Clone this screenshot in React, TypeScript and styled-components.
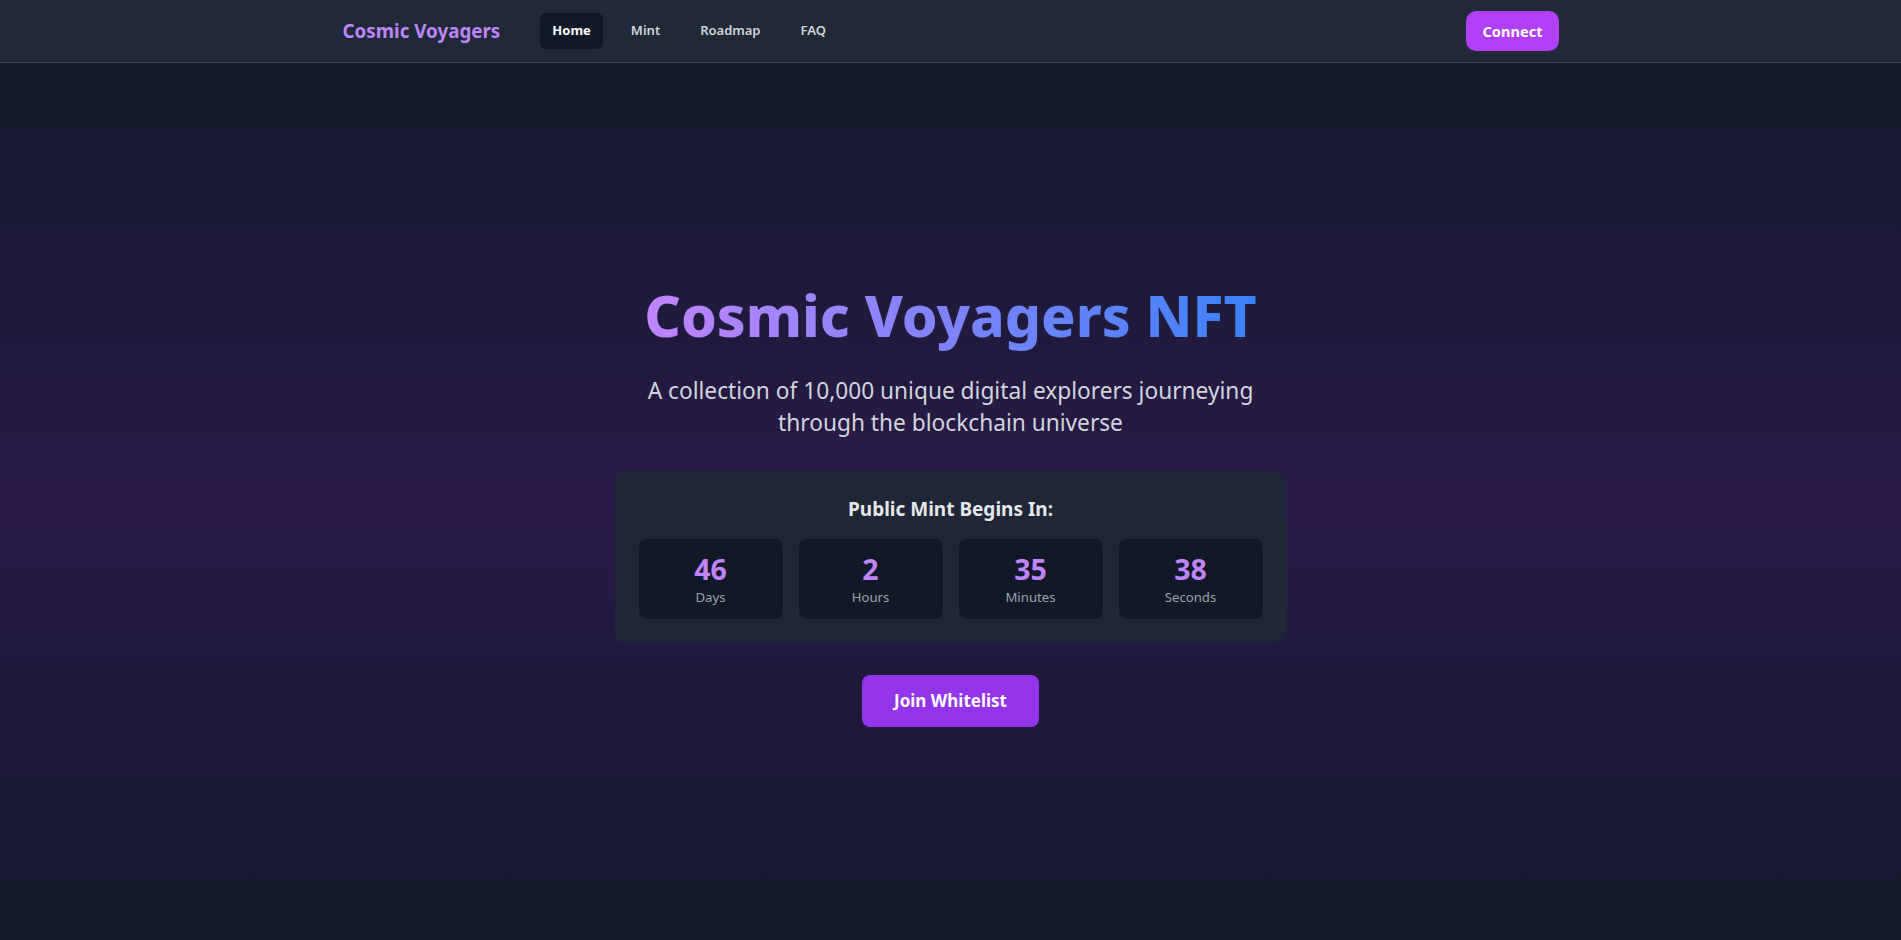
import styled, { createGlobalStyle } from "styled-components";

const GlobalStyle = createGlobalStyle`
  * {
    box-sizing: border-box;
  }
  body {
    margin: 0;
    font-family: "Noto Sans", "Open Sans", sans-serif;
    background: #111827;
    color: #ffffff;
  }
`;

const units = [
  { value: 46, label: "Days" },
  { value: 2, label: "Hours" },
  { value: 35, label: "Minutes" },
  { value: 38, label: "Seconds" },
];

const links = ["Home", "Mint", "Roadmap", "FAQ"];

export default function App() {
  return (
    <Page>
      <GlobalStyle />
      <Navbar>
        <NavInner>
          <NavLeft>
            <Logo>Cosmic Voyagers</Logo>
            <NavLinks>
              {links.map((link) => (
                <NavLink key={link} $active={link === "Home"}>
                  {link}
                </NavLink>
              ))}
            </NavLinks>
          </NavLeft>
          <ConnectButton>Connect</ConnectButton>
        </NavInner>
      </Navbar>

      <Hero>
        <Title>Cosmic Voyagers NFT</Title>
        <Subtitle>
          A collection of 10,000 unique digital explorers journeying through
          the blockchain universe
        </Subtitle>

        <CountdownCard>
          <CountdownTitle>Public Mint Begins In:</CountdownTitle>
          <CountdownGrid>
            {units.map((unit) => (
              <TimeBox key={unit.label}>
                <TimeValue>{unit.value}</TimeValue>
                <TimeLabel>{unit.label}</TimeLabel>
              </TimeBox>
            ))}
          </CountdownGrid>
        </CountdownCard>

        <WhitelistButton>Join Whitelist</WhitelistButton>
      </Hero>
    </Page>
  );
}

const Page = styled.div`
  min-height: 100vh;
  display: flex;
  flex-direction: column;
  background: #111827;
`;

const Navbar = styled.nav`
  background: #1f2937;
  border-bottom: 1px solid #374151;
`;

const NavInner = styled.div`
  max-width: 1280px;
  margin: 0 auto;
  padding: 0 32px;
  height: 62px;
  display: flex;
  align-items: center;
  justify-content: space-between;
`;

const NavLeft = styled.div`
  display: flex;
  align-items: center;
`;

const Logo = styled.span`
  font-size: 18.8px;
  font-weight: 700;
  color: #c084fc;
`;

const NavLinks = styled.div`
  display: flex;
  align-items: center;
  gap: 16px;
  margin-left: 40px;
`;

const NavLink = styled.a<{ $active?: boolean }>`
  padding: 7px 12px 9px;
  border-radius: 6px;
  font-size: 13px;
  line-height: 20px;
  font-weight: ${(p) => (p.$active ? 700 : 600)};
  color: ${(p) => (p.$active ? "#ffffff" : "#d1d5db")};
  background: ${(p) => (p.$active ? "#111827" : "transparent")};
  cursor: pointer;
`;

const ConnectButton = styled.button`
  border: none;
  background: #b03ff5;
  color: #ffffff;
  font-family: inherit;
  font-size: 14.6px;
  line-height: 24px;
  font-weight: 700;
  padding: 8px 16px;
  border-radius: 10px;
  cursor: pointer;
`;

const Hero = styled.main`
  flex: 1;
  display: flex;
  flex-direction: column;
  align-items: center;
  justify-content: center;
  text-align: center;
  padding: 2px 16px 0;
  background: linear-gradient(to bottom, #131a2b 0%, #2a1a48 50%, #131a2b 100%);
`;

const Title = styled.h1`
  margin: 0 0 24px;
  font-size: 57px;
  line-height: 72px;
  font-weight: 800;
  background: linear-gradient(to right, #c084fc, #3b82f6);
  -webkit-background-clip: text;
  background-clip: text;
  color: transparent;
`;

const Subtitle = styled.p`
  margin: 0 0 32px;
  max-width: 672px;
  font-size: 22.7px;
  line-height: 32px;
  color: #d1d5db;
`;

const CountdownCard = styled.div`
  width: 100%;
  max-width: 672px;
  padding: 24px;
  border-radius: 12px;
  background: #1f2637;
`;

const CountdownTitle = styled.h2`
  margin: 0 0 16px;
  font-size: 19px;
  line-height: 28px;
  font-weight: 700;
  color: #e5e7eb;
`;

const CountdownGrid = styled.div`
  display: grid;
  grid-template-columns: repeat(4, 1fr);
  gap: 16px;
`;

const TimeBox = styled.div`
  padding: 12px;
  border-radius: 8px;
  background: #111827;
`;

const TimeValue = styled.div`
  font-size: 28.5px;
  line-height: 36px;
  font-weight: 700;
  color: #c084fc;
`;

const TimeLabel = styled.div`
  font-size: 13.2px;
  line-height: 20px;
  color: #9ca3af;
`;

const WhitelistButton = styled.button`
  margin-top: 32px;
  border: none;
  background: #9333ea;
  color: #ffffff;
  font-family: inherit;
  font-size: 17px;
  line-height: 28px;
  font-weight: 700;
  padding: 12px 32px;
  border-radius: 8px;
  cursor: pointer;
`;
